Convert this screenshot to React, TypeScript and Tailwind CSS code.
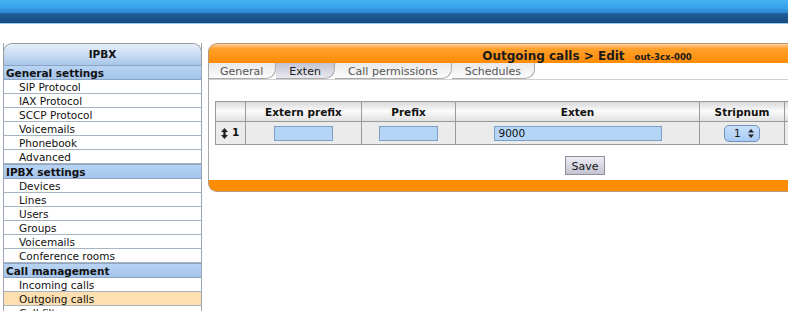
import React from "react";

const menu = [
  {
    title: "General settings",
    items: ["SIP Protocol", "IAX Protocol", "SCCP Protocol", "Voicemails", "Phonebook", "Advanced"],
  },
  {
    title: "IPBX settings",
    items: ["Devices", "Lines", "Users", "Groups", "Voicemails", "Conference rooms"],
  },
  {
    title: "Call management",
    items: ["Incoming calls", "Outgoing calls", "Call filters"],
  },
];

const tabs = ["General", "Exten", "Call permissions", "Schedules"];

function SortIcon() {
  return (
    <svg width="7" height="11" viewBox="0 0 7 11" className="inline-block">
      <path d="M3.5 0 L7 4 L0 4 Z" fill="#222" />
      <rect x="2.3" y="3.5" width="2.4" height="4" fill="#222" />
      <path d="M3.5 11 L7 7 L0 7 Z" fill="#222" />
    </svg>
  );
}

function Sidebar() {
  return (
    <div className="w-[199px] shrink-0 border-x border-[#9aa6b4]">
      <div className="-mx-px flex h-[22px] items-center justify-center rounded-t-[9px] border border-b-0 border-[#9a9a9a] bg-[linear-gradient(to_bottom,#e6effa_0%,#c9dcf3_50%,#a8c6ea_100%)] text-[10.5px] font-bold text-[#111]">
        IPBX
      </div>
      {menu.map((sec) => (
        <div key={sec.title}>
          <div className="flex h-[15px] items-center border-y border-[#8ea5c2] bg-[linear-gradient(to_bottom,#b9d4f3,#a4c4ec)] pl-[2px] pt-[2px] text-[10.5px] font-bold leading-none text-[#111]">
            {sec.title}
          </div>
          {sec.items.map((it) => (
            <div
              key={it}
              className={
                "flex h-[14px] items-center border-b border-[#a7b4c4] pl-[15px] pt-[2px] text-[10.5px] leading-none text-[#111] " +
                (it === "Outgoing calls" ? "bg-[#fedfb0]" : "bg-white")
              }
            >
              {it}
            </div>
          ))}
        </div>
      ))}
    </div>
  );
}

function Content() {
  return (
    <div className="w-[758px] shrink-0">
      <div className="flex h-[20px] items-baseline justify-center rounded-t-[9px] border border-b-0 border-[#b59a7a] bg-[linear-gradient(to_bottom,#ffd09a_0%,#ff9f2a_25%,#ff8c05_100%)] pt-[3px] text-[#1a1a1a]">
        <span className="text-[12px] font-bold">Outgoing calls &gt; Edit</span>
        <span className="ml-[10px] text-[8.5px] font-bold">out-3cx-000</span>
      </div>
      <div className="border-x border-[#a8a8a8] bg-white">
        <div className="flex h-[17px] border-b border-[#cfcfcf]">
          {tabs.map((t, i) => (
            <div
              key={t}
              className={
                "flex items-center rounded-br-[10px] border-r border-b border-[#a9a9a9] pt-[2px] text-[11px] leading-none " +
                (i === 0 ? "pl-[11px] pr-[12px] " : "pl-[13px] pr-[13px] ") +
                (t === "Exten"
                  ? "bg-[linear-gradient(to_bottom,#c3c3d2,#e9e9f0)] text-[#222]"
                  : "bg-[linear-gradient(to_bottom,#e9e9e9,#fbfbfb)] text-[#555]")
              }
            >
              {t}
            </div>
          ))}
        </div>
        <div className="px-[6px] pt-[21px] pb-[5px]">
          <table className="w-[744px] border-collapse text-[10.5px] text-[#111]">
            <thead>
              <tr className="h-[20px] bg-[linear-gradient(to_bottom,#d9d9d9,#fbfbfb_45%,#dedede)]">
                <th className="w-[30px] border border-[#9a9a9a]"></th>
                <th className="w-[116px] border border-[#9a9a9a] pt-[2px] font-bold">Extern prefix</th>
                <th className="w-[94px] border border-[#9a9a9a] pt-[2px] font-bold">Prefix</th>
                <th className="w-[244px] border border-[#9a9a9a] pt-[2px] font-bold">Exten</th>
                <th className="w-[85px] border border-[#9a9a9a] pt-[2px] font-bold">Stripnum</th>
                <th className="border border-[#9a9a9a]"></th>
              </tr>
            </thead>
            <tbody>
              <tr className="h-[23px] bg-[#ebebeb]">
                <td className="border border-[#9a9a9a] pl-[5px] font-bold">
                  <span className="flex items-center gap-[4px]">
                    <SortIcon />1
                  </span>
                </td>
                <td className="border border-[#9a9a9a] text-center">
                  <div className="mx-auto h-[15px] w-[59px] border border-[#7f9fc4] bg-[#b5d5f7]"></div>
                </td>
                <td className="border border-[#9a9a9a] text-center">
                  <div className="mx-auto h-[15px] w-[59px] border border-[#7f9fc4] bg-[#b5d5f7]"></div>
                </td>
                <td className="border border-[#9a9a9a]">
                  <div className="mx-auto flex h-[15px] w-[168px] items-center border border-[#7f9fc4] bg-[#b5d5f7] pl-[4px] pt-[1px] text-[10.5px] leading-none">
                    9000
                  </div>
                </td>
                <td className="border border-[#9a9a9a]">
                  <div className="mx-auto flex h-[17px] w-[36px] items-center justify-between rounded-[5px] border border-[#6f91bd] bg-[linear-gradient(to_bottom,#c8e0fa,#a9cbf3)] pl-[9px] pr-[5px] text-[10.5px] leading-none">
                    <span>1</span>
                    <svg width="6" height="9" viewBox="0 0 6 9">
                      <path d="M3 0 L6 3.5 L0 3.5 Z" fill="#222" />
                      <path d="M3 9 L6 5.5 L0 5.5 Z" fill="#222" />
                    </svg>
                  </div>
                </td>
                <td className="border border-[#9a9a9a]"></td>
              </tr>
            </tbody>
          </table>
          <div className="mt-[11px] flex justify-center">
            <button className="-ml-[4px] h-[19px] w-[40px] border border-[#8e8e9c] bg-[linear-gradient(to_bottom,#ececf4,#c4c4d2)] pt-[1px] text-[11px] leading-none text-[#111]">
              Save
            </button>
          </div>
        </div>
      </div>
      <div className="h-[12px] rounded-b-[9px] border border-t-0 border-[#b59a7a] bg-[#ff8c05]"></div>
    </div>
  );
}

export default function App() {
  return (
    <div className="h-[311px] w-[788px] overflow-hidden bg-white font-['DejaVu_Sans',Verdana,sans-serif]">
      <div className="h-[23px] bg-[linear-gradient(to_bottom,#46b3f4_0%,#3aa4ec_30%,#2b86d0_55%,#1d5c95_60%,#174a7e_100%)]"></div>
      <div className="h-px bg-[#9ccaec]"></div>
      <div className="flex gap-[6px] pl-[3px] pt-[19px]">
        <Sidebar />
        <Content />
      </div>
    </div>
  );
}
